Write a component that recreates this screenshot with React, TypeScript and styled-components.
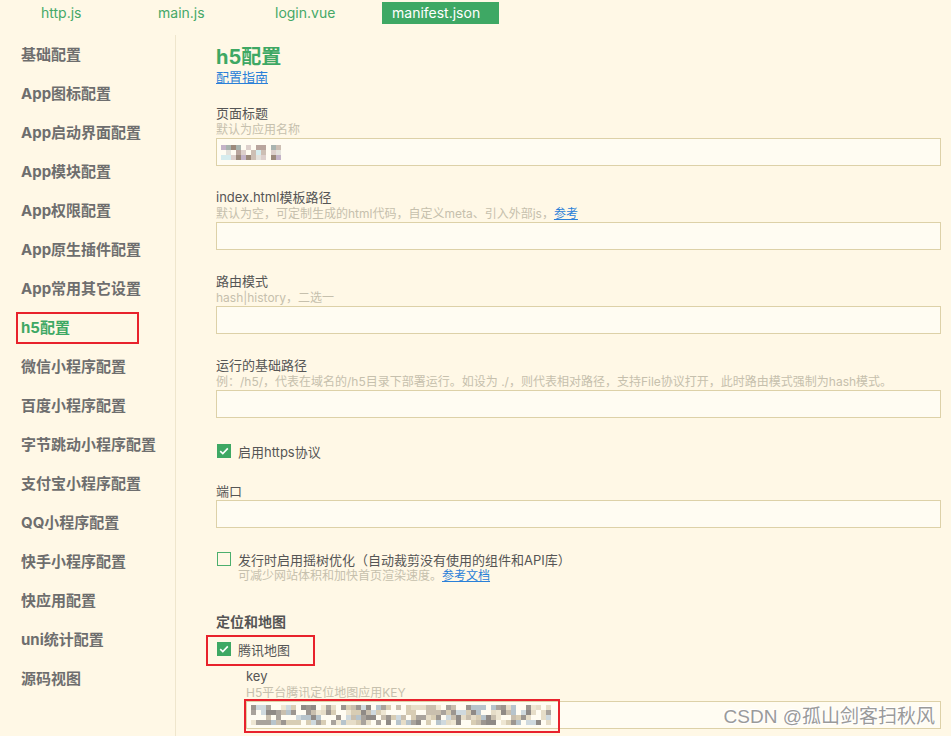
import React from "react";
import styled, { createGlobalStyle } from "styled-components";

const GlobalStyle = createGlobalStyle`
  html, body { margin: 0; padding: 0; background: #fff8e6; }
  body { font-family: Inter, "Noto Sans CJK SC", sans-serif; }
`;

const GREEN = "#3ea864";
const RED = "#e8222c";

const Page = styled.div`
  position: relative;
  width: 951px;
  height: 736px;
  overflow: hidden;
  background: #fff8e6;
  display: flex;
  flex-direction: column;
`;

const TabBar = styled.div`
  display: flex;
  height: 26px;
  padding: 2px 0 0 31px;
  box-sizing: border-box;
  flex-shrink: 0;
`;

const Tab = styled.div<{ $active?: boolean }>`
  width: 117px;
  height: 22px;
  box-sizing: border-box;
  padding-left: 10px;
  font-size: 14px;
  line-height: 22px;
  color: ${(p) => (p.$active ? "#ffffff" : "#45a868")};
  background: ${(p) => (p.$active ? GREEN : "transparent")};
`;

const Body = styled.div`
  display: flex;
  flex: 1;
  min-height: 0;
`;

const Sidebar = styled.nav`
  width: 175px;
  flex-shrink: 0;
  margin-top: 9px;
  border-right: 1px solid #efe6cd;
  display: flex;
  flex-direction: column;
`;

const NavItem = styled.div<{ $active?: boolean; $marked?: boolean }>`
  position: relative;
  height: 39px;
  line-height: 39px;
  padding-left: 21px;
  font-size: 15px;
  font-weight: 700;
  color: ${(p) => (p.$active ? GREEN : "#6e6e6e")};
  &::after {
    content: "";
    display: ${(p) => (p.$marked ? "block" : "none")};
    position: absolute;
    left: 16px;
    top: 4px;
    width: 123px;
    height: 32px;
    box-sizing: border-box;
    border: 2px solid ${RED};
  }
`;

const Main = styled.main`
  flex: 1;
  margin-top: 9px;
  padding: 10px 10px 0 40px;
  display: flex;
  flex-direction: column;
  min-width: 0;
`;

const Title = styled.h1`
  margin: 0;
  font-size: 20px;
  line-height: 24px;
  font-weight: 700;
  color: ${GREEN};
`;

const Link = styled.a`
  color: #2a80d8;
  text-decoration: underline;
  cursor: pointer;
`;

const GuideLink = styled(Link)`
  display: block;
  font-size: 13px;
  line-height: 16px;
  margin-bottom: 20px;
`;

const Field = styled.div<{ $indent?: number; $mb?: number; $mt?: number }>`
  display: flex;
  flex-direction: column;
  margin-left: ${(p) => p.$indent ?? 0}px;
  margin-top: ${(p) => p.$mt ?? 0}px;
  margin-bottom: ${(p) => p.$mb ?? 23}px;
`;

const Label = styled.div`
  font-size: 13px;
  line-height: 17px;
  color: #555555;
`;

const Hint = styled.div`
  font-size: 12px;
  line-height: 16px;
  color: #c6c0ad;
  white-space: nowrap;
`;

const Input = styled.div<{ $marked?: boolean }>`
  position: relative;
  height: 28px;
  box-sizing: border-box;
  border: 1px solid #ddd1a8;
  background: #fffcf2;
  display: flex;
  align-items: center;
  padding-left: 4px;
  &::after {
    content: "";
    display: ${(p) => (p.$marked ? "block" : "none")};
    position: absolute;
    left: -3px;
    top: -3px;
    width: 316px;
    height: 34px;
    box-sizing: border-box;
    border: 2px solid ${RED};
  }
`;

const CheckRow = styled.div<{ $marked?: boolean; $mb?: number }>`
  position: relative;
  display: flex;
  align-items: center;
  gap: 7px;
  height: 20px;
  padding-left: 1px;
  margin-bottom: ${(p) => p.$mb ?? 0}px;
  font-size: 13px;
  color: #555555;
  &::after {
    content: "";
    display: ${(p) => (p.$marked ? "block" : "none")};
    position: absolute;
    left: -10px;
    top: -4px;
    width: 109px;
    height: 31px;
    box-sizing: border-box;
    border: 2px solid ${RED};
  }
`;

const Box = styled.span<{ $checked?: boolean }>`
  width: 14px;
  height: 14px;
  box-sizing: border-box;
  flex-shrink: 0;
  display: flex;
  align-items: center;
  justify-content: center;
  background: ${(p) => (p.$checked ? GREEN : "transparent")};
  border: ${(p) => (p.$checked ? "none" : `1.5px solid #4caf6e`)};
`;

const OptionBlock = styled.div`
  display: flex;
  flex-direction: column;
  margin-bottom: 28px;
`;

const OptionLine = styled.div`
  display: flex;
  align-items: center;
  gap: 7px;
  height: 18px;
  padding-left: 1px;
  font-size: 13px;
  color: #555555;
`;

const OptionHint = styled(Hint)`
  padding-left: 22px;
`;

const SectionTitle = styled.div`
  font-size: 14px;
  line-height: 20px;
  font-weight: 700;
  color: #555555;
  margin-bottom: 7px;
`;

const Watermark = styled.div`
  position: absolute;
  right: 16px;
  top: 705px;
  font-family: "Liberation Sans", "Noto Sans CJK SC", sans-serif;
  font-size: 19px;
  line-height: 24px;
  color: #9a9a9a;
  text-shadow: 0 0 1px #fff, 1px 1px 0 #fff, -1px -1px 0 #fff;
  white-space: nowrap;
`;

const Check = () => (
  <svg width="10" height="8" viewBox="0 0 10 8">
    <path d="M1.2 4.2 L3.8 6.6 L8.8 1.4" fill="none" stroke="#fff" strokeWidth="1.6" />
  </svg>
);

function Mosaic({ w, h, cell, seed, palette }: { w: number; h: number; cell: number; seed: number; palette: string[] }) {
  let s = seed;
  const rnd = () => {
    s = (s * 1103515245 + 12345) % 2147483648;
    return s / 2147483648;
  };
  const rects: React.ReactElement[] = [];
  const cols = Math.floor(w / cell);
  const rows = Math.floor(h / cell);
  for (let r = 0; r < rows; r++) {
    for (let c = 0; c < cols; c++) {
      const v = rnd();
      if (v < 0.25) continue;
      const color = palette[Math.floor(rnd() * palette.length)];
      rects.push(<rect key={`${r}-${c}`} x={c * cell} y={r * cell} width={cell} height={cell} fill={color} />);
    }
  }
  return (
    <svg width={w} height={h} viewBox={`0 0 ${w} ${h}`}>
      {rects}
    </svg>
  );
}

const navItems = [
  "基础配置",
  "App图标配置",
  "App启动界面配置",
  "App模块配置",
  "App权限配置",
  "App原生插件配置",
  "App常用其它设置",
  "h5配置",
  "微信小程序配置",
  "百度小程序配置",
  "字节跳动小程序配置",
  "支付宝小程序配置",
  "QQ小程序配置",
  "快手小程序配置",
  "快应用配置",
  "uni统计配置",
  "源码视图",
];

const tabs = ["http.js", "main.js", "login.vue", "manifest.json"];

export default function App() {
  return (
    <Page>
      <GlobalStyle />
      <TabBar>
        {tabs.map((t) => (
          <Tab key={t} $active={t === "manifest.json"}>
            {t}
          </Tab>
        ))}
      </TabBar>
      <Body>
        <Sidebar>
          {navItems.map((n) => (
            <NavItem key={n} $active={n === "h5配置"} $marked={n === "h5配置"}>
              {n}
            </NavItem>
          ))}
        </Sidebar>
        <Main>
          <Title>h5配置</Title>
          <GuideLink>配置指南</GuideLink>

          <Field>
            <Label>页面标题</Label>
            <Hint>默认为应用名称</Hint>
            <Input>
              <Mosaic w={60} h={15} cell={5} seed={7} palette={["#b9a59d", "#ddd0cc", "#c4b4c8", "#e4e2dc", "#9c8a7c", "#cdbfb4", "#d6ecee", "#a9b4b0"]} />
            </Input>
          </Field>

          <Field>
            <Label>index.html模板路径</Label>
            <Hint>
              默认为空，可定制生成的html代码，自定义meta、引入外部js，<Link>参考</Link>
            </Hint>
            <Input />
          </Field>

          <Field>
            <Label>路由模式</Label>
            <Hint>hash|history，二选一</Hint>
            <Input />
          </Field>

          <Field>
            <Label>运行的基础路径</Label>
            <Hint>例：/h5/，代表在域名的/h5目录下部署运行。如设为 ./，则代表相对路径，支持File协议打开，此时路由模式强制为hash模式。</Hint>
            <Input />
          </Field>

          <CheckRow $mb={22}>
            <Box $checked>
              <Check />
            </Box>
            启用https协议
          </CheckRow>

          <Field $mb={22}>
            <Label>端口</Label>
            <Input />
          </Field>

          <OptionBlock>
            <OptionLine>
              <Box />
              发行时启用摇树优化（自动裁剪没有使用的组件和API库）
            </OptionLine>
            <OptionHint>
              可减少网站体积和加快首页渲染速度。<Link>参考文档</Link>
            </OptionHint>
          </OptionBlock>

          <SectionTitle>定位和地图</SectionTitle>
          <CheckRow $marked>
            <Box $checked>
              <Check />
            </Box>
            腾讯地图
          </CheckRow>

          <Field $indent={30} $mb={0} $mt={9}>
            <Label>key</Label>
            <Hint>H5平台腾讯定位地图应用KEY</Hint>
            <Input $marked>
              <Mosaic w={300} h={20} cell={5} seed={42} palette={["#c9bfae", "#a9a39c", "#d8cdb4", "#b7c4cc", "#9c9690", "#e6ddc8", "#cfd9de", "#8f8a86", "#eee6d2"]} />
            </Input>
          </Field>
        </Main>
      </Body>
      <Watermark>CSDN @孤山剑客扫秋风</Watermark>
    </Page>
  );
}
